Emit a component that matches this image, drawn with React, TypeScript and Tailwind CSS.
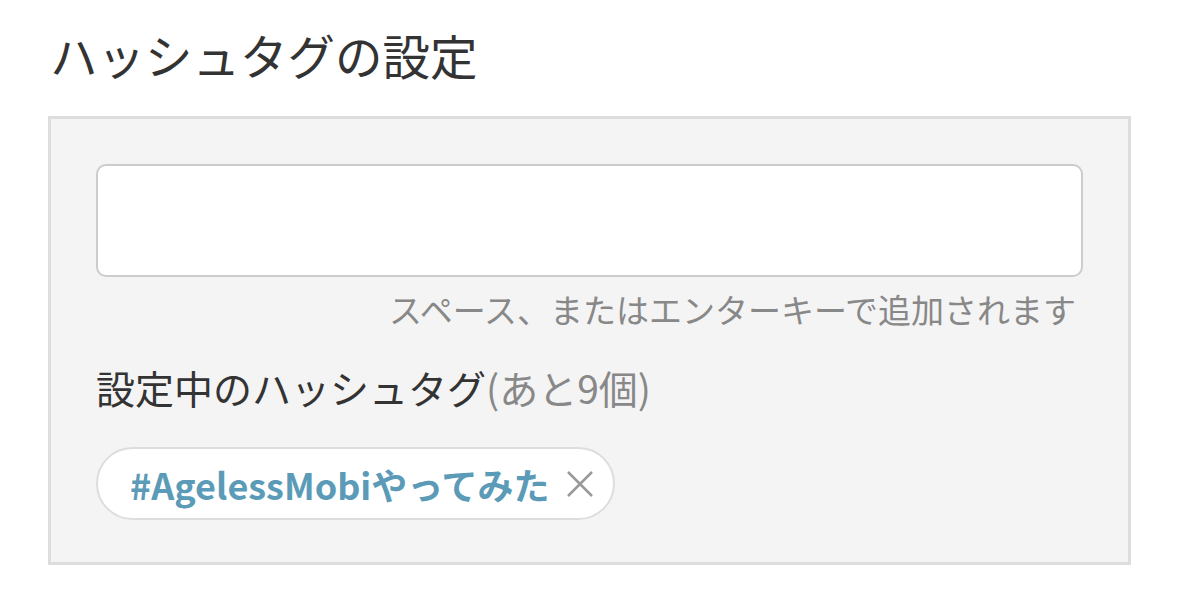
import React from "react";

export default function App() {
  const font = { fontFamily: '"Noto Sans CJK JP", "Noto Sans", sans-serif' };
  return (
    <div className="w-[1179px] h-[609px] bg-white pl-[48px] pr-[48px]" style={font}>
      <h1 className="mt-[20px] mb-[27px] text-[47.5px] leading-[69px] text-[#333] font-normal pl-[2px]">
        ハッシュタグの設定
      </h1>
      <div className="border-[3px] border-[#dddddd] bg-[#f4f4f4] px-[45px] pt-[45px] pb-[42px]">
        <div className="h-[113px] rounded-[10px] border-2 border-[#cccccc] bg-white" />
        <p className="mt-[8px] pr-[7px] text-right text-[33px] leading-[48px] text-[#888]">
          スペース、またはエンターキーで追加されます
        </p>
        <p className="mt-[28px] text-[39px] leading-[52px] text-[#333]">
          設定中のハッシュタグ<span className="text-[#888]">(あと9個)</span>
        </p>
        <div className="mt-[34px] flex">
          <div className="flex h-[73px] items-center rounded-full border-2 border-[#dddddd] bg-white pl-[32px] pr-[19px]">
            <span className="text-[36px] font-bold leading-none text-[#5b9bb8]">#AgelessMobiやってみた</span>
            <svg className="ml-[16px]" width="28" height="28" viewBox="0 0 28 28" fill="none" stroke="#999" strokeWidth="2.5" strokeLinecap="butt">
              <path d="M2 2L26 26M26 2L2 26" />
            </svg>
          </div>
        </div>
      </div>
    </div>
  );
}
